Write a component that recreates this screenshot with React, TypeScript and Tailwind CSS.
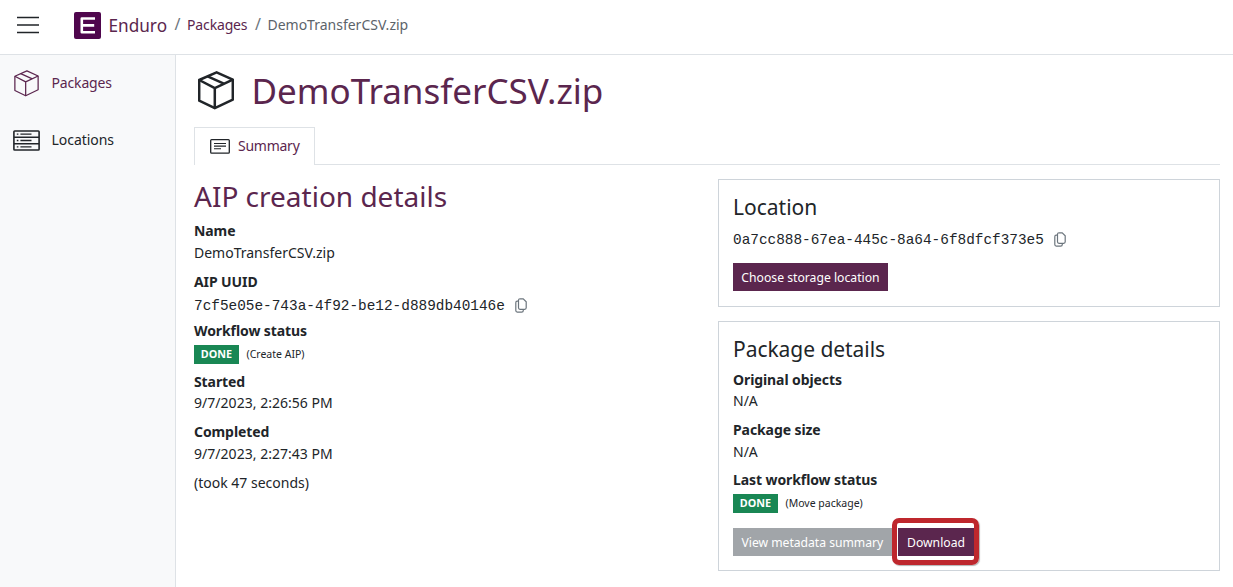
import type { ReactNode } from "react";

function BoxIcon({ className, strokeWidth }: { className: string; strokeWidth: number }) {
  return (
    <svg
      viewBox="0 0 36 39"
      fill="none"
      stroke="currentColor"
      strokeWidth={strokeWidth}
      strokeLinejoin="round"
      className={className}
    >
      <path d="M18.6 1.3 34.8 8.6V28.6L16.8 37.2 1.2 29.6V9Z" />
      <path d="M1.2 9 16.8 17.2 34.8 8.6M16.8 17.2V37.2M9.6 5.3 26.4 12.8" />
    </svg>
  );
}

function RackIcon() {
  return (
    <svg viewBox="0 0 27 21" fill="none" stroke="currentColor" strokeWidth="1.6" className="h-[21px] w-[27px]">
      <rect x="0.9" y="1" width="25.2" height="19" rx="0.8" />
      <path d="M1 7.3H26M1 13.7H26" />
      <path d="M3.8 4.2H5.4M7.4 4.2H18.5M3.8 10.5H5.4M7.4 10.5H18.5M3.8 16.8H5.4M7.4 16.8H18.5" strokeWidth="1.3" />
    </svg>
  );
}

function SummaryIcon() {
  return (
    <svg viewBox="0 0 20 15" fill="none" stroke="#212529" strokeWidth="1.3" className="h-[15px] w-5">
      <rect x="0.7" y="0.7" width="18.6" height="13.4" rx="0.9" />
      <path d="M4 4.5H16M4 7.1H16M4 9.7H11" strokeWidth="1.1" />
    </svg>
  );
}

function CopyIcon() {
  return (
    <svg viewBox="0 0 12 15" fill="none" stroke="#6c757d" strokeWidth="1.2" className="h-[15px] w-3">
      <path d="M5 .8H8.2L11.2 3.8V9.8Q11.2 11.3 9.7 11.3H5Q3.5 11.3 3.5 9.8V2.3Q3.5 .8 5 .8Z" />
      <path d="M3.4 3.2H2.2Q.8 3.2.8 4.7V12.6Q.8 14.1 2.3 14.1H6.6Q8.3 14.1 8.3 12.4V11.4" />
    </svg>
  );
}

function Label({ children }: { children: ReactNode }) {
  return <dt className="h-[21px] font-bold tracking-[-0.09px]">{children}</dt>;
}

function Uuid({ children }: { children: string }) {
  return (
    <div className="flex h-[21px] items-center font-['Liberation_Mono',monospace] text-[14.4px]">
      <span className="pt-[2px]">{children}</span>
      <span className="ml-[10px]">
        <CopyIcon />
      </span>
    </div>
  );
}

function Status({ note }: { note: string }) {
  return (
    <div className="flex h-[18.5px] items-center">
      <span className="flex h-full w-[45px] items-center justify-center bg-[#198754] pb-[2px] text-[10.8px] font-bold text-white">
        DONE
      </span>
      <span className="ml-[7.5px] text-[10.5px]">{note}</span>
    </div>
  );
}

export default function App() {
  return (
    <div className="flex h-[587px] w-full flex-col overflow-hidden bg-white font-['Noto_Sans',sans-serif] text-[14px] leading-[21px] text-[#212529]">
      <header className="flex h-[55px] shrink-0 items-start border-b border-[#dee2e6]">
        <button aria-label="Menu" className="mt-4 ml-4 h-5 w-6 text-[#212529]">
          <svg viewBox="0 0 24 20" stroke="currentColor" strokeWidth="1.3" className="h-5 w-6">
            <path d="M1 1.5H23M1 9H23M1 16.5H23" />
          </svg>
        </button>
        <svg viewBox="0 0 27 27" className="mt-3 ml-[34px] size-[27px]">
          <rect width="27" height="27" rx="2" fill="#4f064d" />
          <path d="M21 6.5H7.8V20.3H21M8 13.4H20.2" fill="none" stroke="#fff" strokeWidth="2.6" strokeLinejoin="round" />
        </svg>
        <nav className="flex pt-[14px] text-[#5b264e]">
          <span className="ml-[7.5px] pt-px text-[17.2px] leading-[22px]">Enduro</span>
          <span className="ml-[7.5px] w-[5px] text-[16px] text-[#6c757d]">/</span>
          <span className="ml-[7.5px] tracking-[-0.15px]">Packages</span>
          <span className="ml-[7.5px] w-[5px] text-[16px] text-[#6c757d]">/</span>
          <span className="ml-[7.5px] text-[#5c636a]">DemoTransferCSV.zip</span>
        </nav>
      </header>
      <div className="flex min-h-0 grow">
        <aside className="w-[176px] shrink-0 border-r border-[#dee2e6] bg-[#f8f9fa]">
          <div className="flex h-[57px] items-center pl-[13px] text-[#5b264e]">
            <BoxIcon className="h-[27px] w-[27px]" strokeWidth={1.8} />
            <span className="ml-[11.5px] pb-[2px] tracking-[-0.15px]">Packages</span>
          </div>
          <div className="flex h-[57px] items-center pl-[13px]">
            <RackIcon />
            <span className="ml-[11.5px] pb-[2px] tracking-[-0.05px]">Locations</span>
          </div>
        </aside>
        <main className="min-w-0 grow pr-[13px] pl-[18px]">
          <div className="flex h-[72px] items-center">
            <BoxIcon className="ml-[3.5px] mb-px h-[39px] w-9" strokeWidth={2.5} />
            <h1 className="ml-[18px] text-[35px] leading-[44px] text-[#5b264e]">DemoTransferCSV.zip</h1>
          </div>
          <div className="flex h-[38px]">
            <div className="flex w-[121px] items-center border-x border-t border-[#dee2e6] pb-px pl-[15px] text-[#5b264e]">
              <SummaryIcon />
              <span className="ml-2 pb-[2px] tracking-[-0.25px]">Summary</span>
            </div>
            <div className="grow border-b border-[#dee2e6]" />
          </div>
          <div className="flex">
            <section className="w-[524px] pt-[14px]">
              <h2 className="text-[28px] leading-[35px] text-[#5b264e]">AIP creation details</h2>
              <dl className="pt-[6px]">
                <Label>Name</Label>
                <dd className="pt-px">DemoTransferCSV.zip</dd>
                <div className="h-2" />
                <Label>AIP UUID</Label>
                <dd className="pt-[3px]">
                  <Uuid>7cf5e05e-743a-4f92-be12-d889db40146e</Uuid>
                </dd>
                <div className="h-[4px]" />
                <Label>Workflow status</Label>
                <dd className="h-[30px] pt-1">
                  <Status note="(Create AIP)" />
                </dd>
                <Label>Started</Label>
                <dd className="tracking-[0.03px]">9/7/2023, 2:26:56 PM</dd>
                <div className="h-2" />
                <Label>Completed</Label>
                <dd className="pt-px tracking-[0.03px]">9/7/2023, 2:27:43 PM</dd>
                <dd className="pt-2">(took 47 seconds)</dd>
              </dl>
            </section>
            <div className="grow pt-[14px]">
              <section className="h-[128px] border border-[#ced4da] px-[14px] pt-[14px]">
                <h3 className="text-[21px] leading-[26px]">Location</h3>
                <div className="pt-[9px]">
                  <Uuid>0a7cc888-67ea-445c-8a64-6f8dfcf373e5</Uuid>
                </div>
                <button className="mt-[13px] flex h-7 w-[155px] items-center justify-center bg-[#5b264e] text-[12.2px] text-white">
                  Choose storage location
                </button>
              </section>
              <section className="mt-[14px] h-[250px] border border-[#ced4da] px-[14px] pt-[14px]">
                <h3 className="text-[21px] leading-[26px] tracking-[-0.05px]">Package details</h3>
                <dl className="pt-[7px]">
                  <Label>Original objects</Label>
                  <dd className="h-[29px]">N/A</dd>
                  <Label>Package size</Label>
                  <dd className="h-[29px] pt-px">N/A</dd>
                  <Label>Last workflow status</Label>
                  <dd className="pt-1">
                    <Status note="(Move package)" />
                  </dd>
                </dl>
                <div className="mt-[15.5px] flex gap-[5px]">
                  <button className="flex h-7 w-[160px] items-center bg-[#a1a5a9] pt-px pl-[8.5px] text-[12.2px] tracking-[-0.03px] text-white">
                    View metadata summary
                  </button>
                  <div className="relative">
                    <button className="flex h-7 w-[76px] items-center justify-center bg-[#5b264e] pt-px text-[12.2px] text-white">
                      Download
                    </button>
                    <div className="absolute -top-[10px] -left-[6px] h-[47px] w-[87px] rounded-[7px] border-[5.5px] border-[#be272d] shadow-[1px_1px_1px_rgba(0,0,0,0.3)]" />
                  </div>
                </div>
              </section>
            </div>
          </div>
        </main>
      </div>
    </div>
  );
}
